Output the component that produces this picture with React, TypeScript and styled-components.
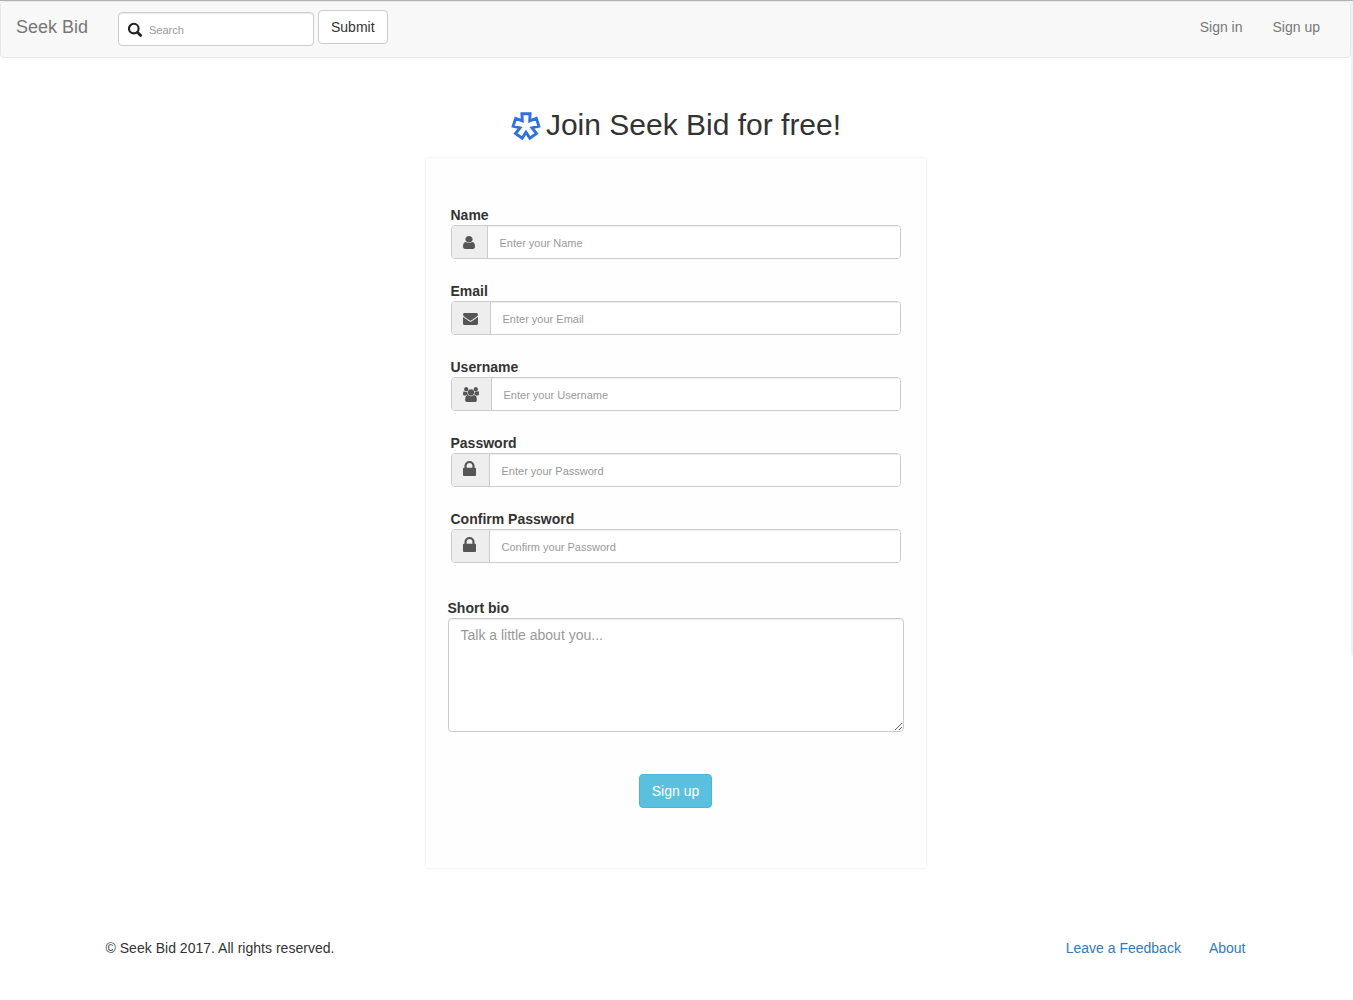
import React from "react";
import styled, { createGlobalStyle } from "styled-components";

const GlobalStyle = createGlobalStyle`
  *, *::before, *::after { box-sizing: border-box; }
  body {
    margin: 0;
    background: #fff;
    color: #333;
    font: 14px/20px "Liberation Sans", Arial, sans-serif;
  }
  input, textarea, button { font-family: inherit; }
`;

const Page = styled.div`
  position: relative;
  height: 1000px;
  border-top: 1px solid #b3b1b1;
  padding-right: 2px;
  overflow: hidden;
`;

const ScrollTrack = styled.div`
  position: absolute;
  top: 0;
  right: 0;
  width: 2px;
  height: 654px;
  background: #f1f1f1;
`;

const Navbar = styled.nav`
  display: flex;
  align-items: flex-start;
  height: 57px;
  padding: 0 15px;
  background: #f8f8f8;
  border: 1px solid #e7e7e7;
  border-radius: 4px;
`;

const Brand = styled.a`
  width: 102px;
  padding-top: 15px;
  font-size: 18px;
  line-height: 20px;
  color: #777;
`;

const SearchForm = styled.form`
  display: flex;
  gap: 4px;
  padding-top: 8px;
  margin: 0;
`;

const SearchBox = styled.label`
  display: flex;
  align-items: center;
  gap: 6px;
  width: 196px;
  height: 34px;
  margin-top: 2px;
  padding: 0 9px;
  background: #fff;
  border: 1px solid #ccc;
  border-radius: 4px;
  box-shadow: inset 0 1px 1px rgba(0, 0, 0, 0.075);
`;

const SearchInput = styled.input`
  flex: 1;
  min-width: 0;
  padding: 2px 0 0;
  border: 0;
  outline: 0;
  background: transparent;
  font-size: 11px;
  &::placeholder { color: #999; }
`;

const Button = styled.button<{ $primary?: boolean }>`
  height: 34px;
  padding: 6px 12px;
  font-size: 14px;
  line-height: 20px;
  border-radius: 4px;
  border: 1px solid ${(p) => (p.$primary ? "#46b8da" : "#ccc")};
  background: ${(p) => (p.$primary ? "#5bc0de" : "#fff")};
  color: ${(p) => (p.$primary ? "#fff" : "#333")};
`;

const NavLinks = styled.div`
  display: flex;
  gap: 30px;
  margin-left: auto;
  padding: 15px 15px 0 0;
  color: #777;
`;

const Main = styled.main`
  display: flex;
  flex-direction: column;
  align-items: center;
`;

const Title = styled.h1`
  display: flex;
  align-items: flex-start;
  gap: 5px;
  height: 34px;
  margin: 50px 0 16px;
  padding-left: 1px;
  font-size: 30px;
  font-weight: 400;
  line-height: 33px;
`;

const Card = styled.form`
  display: flex;
  flex-direction: column;
  width: 500px;
  height: 710px;
  margin: 0;
  padding: 47px 25px 0;
  background: #fefefe;
  border-radius: 2px;
  box-shadow: 0 0 3px rgba(0, 0, 0, 0.1);
`;

const Field = styled.div`
  display: flex;
  flex-direction: column;
  height: 76px;
`;

const Label = styled.label`
  height: 20px;
  font-weight: 700;
`;

const InputGroup = styled.div`
  display: flex;
  height: 34px;
  border: 1px solid #ccc;
  border-radius: 4px;
  overflow: hidden;
`;

const Addon = styled.span<{ $width: number; $top: number; $left: number }>`
  display: flex;
  align-items: flex-start;
  flex: none;
  width: ${(p) => p.$width}px;
  padding: ${(p) => p.$top}px 0 0 ${(p) => p.$left}px;
  background: #eee;
  border-right: 1px solid #ccc;
  color: #555;
`;

const TextInput = styled.input`
  flex: 1;
  min-width: 0;
  padding: 2px 12px 0;
  border: 0;
  outline: 0;
  background: #fff;
  box-shadow: inset 0 1px 1px rgba(0, 0, 0, 0.075);
  font-size: 11px;
  &::placeholder { color: #999; }
`;

const BioField = styled.div`
  display: flex;
  flex-direction: column;
  margin: 13px -3px 42px;
`;

const TextArea = styled.textarea`
  display: block;
  width: 100%;
  height: 114px;
  padding: 6px 12px;
  background: #fff;
  border: 1px solid #ccc;
  border-radius: 4px;
  box-shadow: inset 0 1px 1px rgba(0, 0, 0, 0.075);
  font-size: 14px;
  line-height: 20px;
  resize: vertical;
  &::placeholder { color: #999; }
`;

const Actions = styled.div`
  display: flex;
  justify-content: center;
`;

const Footer = styled.footer`
  display: flex;
  justify-content: space-between;
  margin: 70px 105.5px 0;
`;

const Copyright = styled.span`
  letter-spacing: 0.02px;
`;

const FooterLinks = styled.div`
  display: flex;
  gap: 28px;
  color: #337ab7;
`;

const Glyph = styled.svg`
  display: block;
  flex: none;
  fill: currentColor;
`;

const LogoMark = styled(Glyph)`
  margin-top: 3px;
`;

const icons = {
  user: {
    box: "256 128 1280 1536",
    d: "M1536 1399q0 109-62.5 187t-150.5 78h-854q-88 0-150.5-78t-62.5-187q0-85 8.5-160.5t31.5-152 58.5-131 94-89 134.5-34.5q131 128 313 128t313-128q76 0 134.5 34.5t94 89 58.5 131 31.5 152 8.5 160.5zm-256-887q0 159-112.5 271.5t-271.5 112.5-271.5-112.5-112.5-271.5 112.5-271.5 271.5-112.5 271.5 112.5 112.5 271.5z",
  },
  envelope: {
    box: "0 256 1792 1408",
    d: "M1792 710v794q0 66-47 113t-113 47h-1472q-66 0-113-47t-47-113v-794q44 49 101 87 362 246 497 345 57 42 92.5 65.5t94.5 48 110 24.5h2q51 0 110-24.5t94.5-48 92.5-65.5q170-123 498-345 57-39 100-87zm0-294q0 79-49 151t-122 123q-376 261-468 325-10 7-42.5 31t-54 38.5-52 32.5-57.5 27-50 9h-2q-23 0-50-9t-57.5-27-52-32.5-54-38.5-42.5-31q-91-64-262-182.5t-205-142.5q-62-42-117-115.5t-55-136.5q0-78 41.5-130t118.5-52h1472q65 0 112.5 47t47.5 113z",
  },
  users: {
    box: "64 0 1920 1792",
    d: "M657 896q-162 5-265 128h-134q-82 0-138-40.5t-56-118.5q0-353 124-353 6 0 43.5 21t97.5 42.5 119 21.5q67 0 133-23-5 37-5 66 0 159 93 293zm1071 637q0 120-73 189.5t-194 69.5h-874q-121 0-194-69.5t-73-189.5q0-53 3.5-103.5t14-109 26.5-108.5 43-97.5 62-81 85.5-53.5 111.5-20q10 0 43 21.5t73 48 107 48 135 21.5 135-21.5 107-48 73-48 43-21.5q61 0 111.5 20t85.5 53.5 62 81 43 97.5 26.5 108.5 14 109 3.5 103.5zm-1024-1277q0 106-75 181t-181 75-181-75-75-181 75-181 181-75 181 75 75 181zm704 384q0 159-112.5 271.5t-271.5 112.5-271.5-112.5-112.5-271.5 112.5-271.5 271.5-112.5 271.5 112.5 112.5 271.5zm576 225q0 78-56 118.5t-138 40.5h-134q-103-123-265-128 93-134 93-293 0-29-5-66 66 23 133 23 59 0 119-21.5t97.5-42.5 43.5-21q124 0 124 353zm-128-609q0 106-75 181t-181 75-181-75-75-181 75-181 181-75 181 75 75 181z",
  },
  lock: {
    box: "320 128 1152 1408",
    d: "M640 768h512v-192q0-106-75-181t-181-75-181 75-75 181v192zm832 96v576q0 40-28 68t-68 28h-960q-40 0-68-28t-28-68v-576q0-40 28-68t68-28h32v-192q0-184 132-316t316-132 316 132 132 316v192h32q40 0 68 28t28 68z",
  },
};

type IconName = keyof typeof icons;

const Icon = ({ name, width, height }: { name: IconName; width: number; height: number }) => (
  <Glyph
    width={width}
    height={height}
    viewBox={icons[name].box}
    preserveAspectRatio="none"
    aria-hidden="true"
  >
    <path d={icons[name].d} />
  </Glyph>
);

const SearchIcon = () => (
  <Glyph width="15" height="16" viewBox="0 0 15 16" aria-hidden="true">
    <circle cx="5.8" cy="7.6" r="4.8" fill="none" stroke="#222" strokeWidth="2.1" />
    <path d="M9.6 11.4 12.7 14.4" stroke="#222" strokeWidth="2.8" strokeLinecap="round" />
  </Glyph>
);

// Five identical arms around the centre, joined by inner notches.
const starPoints = Array.from({ length: 5 }, (_, i) => {
  const turn = (i * 72 * Math.PI) / 180;
  return [[-4.1, -12.2], [4.1, -12.2], [3.7, -5.1]]
    .map(([x, y]) =>
      [
        (15 + x * Math.cos(turn) - y * Math.sin(turn)).toFixed(2),
        (15 + x * Math.sin(turn) + y * Math.cos(turn)).toFixed(2),
      ].join(","),
    )
    .join(" ");
}).join(" ");

const Logo = () => (
  <LogoMark width="30" height="30" viewBox="0 0 30 30" aria-hidden="true">
    <polygon points={starPoints} fill="none" stroke="#2f70e2" strokeWidth="2.9" />
  </LogoMark>
);

const fields: {
  label: string;
  hint: string;
  icon: IconName;
  addon: number;
  w: number;
  h: number;
  top: number;
  left: number;
  type: string;
}[] = [
  { label: "Name", hint: "Enter your Name", icon: "user", addon: 36, w: 12, h: 13, top: 10, left: 11, type: "text" },
  { label: "Email", hint: "Enter your Email", icon: "envelope", addon: 39, w: 15, h: 12, top: 11, left: 11, type: "text" },
  { label: "Username", hint: "Enter your Username", icon: "users", addon: 40, w: 16, h: 15, top: 9, left: 11, type: "text" },
  { label: "Password", hint: "Enter your Password", icon: "lock", addon: 38, w: 13, h: 15, top: 7, left: 11.5, type: "password" },
  { label: "Confirm Password", hint: "Confirm your Password", icon: "lock", addon: 38, w: 13, h: 15, top: 7, left: 11.5, type: "password" },
];

export default function App() {
  return (
    <Page>
      <GlobalStyle />
      <Navbar>
        <Brand>Seek Bid</Brand>
        <SearchForm>
          <SearchBox>
            <SearchIcon />
            <SearchInput placeholder="Search" />
          </SearchBox>
          <Button type="button">Submit</Button>
        </SearchForm>
        <NavLinks>
          <a>Sign in</a>
          <a>Sign up</a>
        </NavLinks>
      </Navbar>
      <Main>
        <Title>
          <Logo />
          Join Seek Bid for free!
        </Title>
        <Card>
          {fields.map((f) => (
            <Field key={f.label}>
              <Label>{f.label}</Label>
              <InputGroup>
                <Addon $width={f.addon} $top={f.top} $left={f.left}>
                  <Icon name={f.icon} width={f.w} height={f.h} />
                </Addon>
                <TextInput type={f.type} placeholder={f.hint} />
              </InputGroup>
            </Field>
          ))}
          <BioField>
            <Label>Short bio</Label>
            <TextArea placeholder="Talk a little about you..." />
          </BioField>
          <Actions>
            <Button type="button" $primary>
              Sign up
            </Button>
          </Actions>
        </Card>
      </Main>
      <Footer>
        <Copyright>© Seek Bid 2017. All rights reserved.</Copyright>
        <FooterLinks>
          <a>Leave a Feedback</a>
          <a>About</a>
        </FooterLinks>
      </Footer>
      <ScrollTrack />
    </Page>
  );
}
